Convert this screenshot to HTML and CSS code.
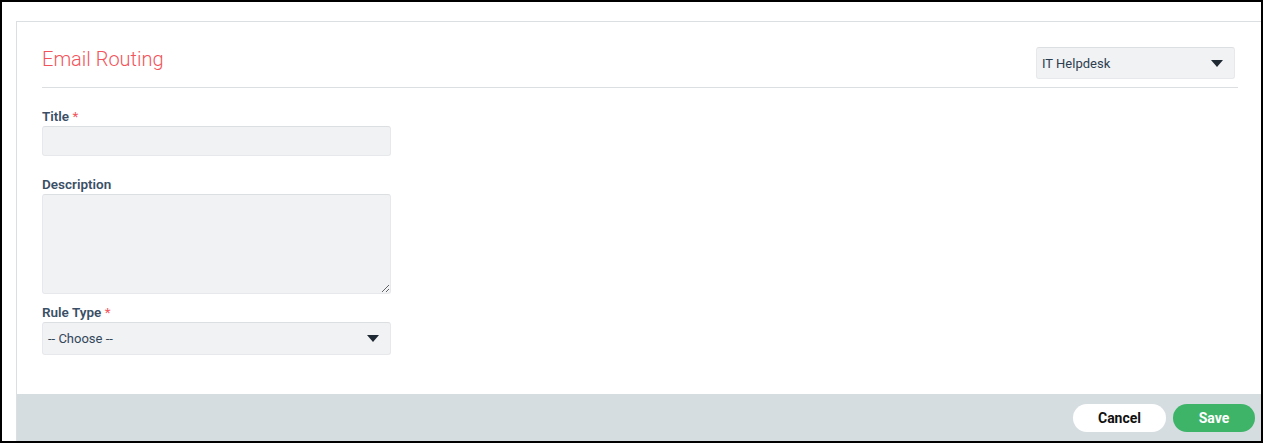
FILE: index.html
```html
<!DOCTYPE html>
<html lang="en">
<head>
<meta charset="utf-8">
<title>Email Routing</title>
<link rel="stylesheet" href="styles.css">
</head>
<body>
<div class="frame">
  <div class="panel">
    <div class="panel-body">
      <div class="header">
        <h1 class="title">Email Routing</h1>
        <div class="select select-team">
          <span class="select-text">IT Helpdesk</span>
          <svg class="caret" width="12" height="7" viewBox="0 0 12 7"><path d="M0 0 L12 0 L6 7 Z" fill="#1f2933"/></svg>
        </div>
      </div>
      <div class="form">
        <div class="field field-title">
          <label class="label">Title <span class="req">*</span></label>
          <input class="input" type="text">
        </div>
        <div class="field field-desc">
          <label class="label">Description</label>
          <textarea class="textarea"></textarea>
        </div>
        <div class="field">
          <label class="label">Rule Type <span class="req">*</span></label>
          <div class="select select-rule">
            <span class="select-text">-- Choose --</span>
            <svg class="caret" width="12" height="7" viewBox="0 0 12 7"><path d="M0 0 L12 0 L6 7 Z" fill="#1f2933"/></svg>
          </div>
        </div>
      </div>
    </div>
    <div class="footer">
      <button class="btn btn-cancel">Cancel</button>
      <button class="btn btn-save">Save</button>
    </div>
  </div>
</div>
</body>
</html>
```

FILE: styles.css
```css
html, body {
  margin: 0;
  padding: 0;
  background: #ffffff;
}
.frame {
  box-sizing: border-box;
  width: 1263px;
  height: 443px;
  border: 2px solid #000;
  padding: 19px 0 0 14px;
  display: flex;
  font-family: Roboto, "Liberation Sans", Arial, sans-serif;
}
.panel {
  flex: 1;
  display: flex;
  flex-direction: column;
  border-top: 1px solid #dcdfe2;
  border-left: 1px solid #dcdfe2;
  background: #fff;
}
.panel-body {
  flex: 1;
  padding: 0 23px 0 25px;
}
.header {
  display: flex;
  align-items: center;
  justify-content: space-between;
  padding: 25px 3px 8px 0;
  border-bottom: 1px solid #dcdfe2;
}
.title {
  margin: 0;
  font-size: 20px;
  font-weight: 300;
  color: #f2545b;
  line-height: 26px;
  position: relative;
  top: -4px;
}
.select {
  box-sizing: border-box;
  display: flex;
  align-items: center;
  justify-content: space-between;
  background: #f1f2f4;
  border: 1px solid #e6e8eb;
  border-top-color: #dcdfe2;
  border-radius: 3px;
  font-size: 13px;
  color: #33475b;
}
.select-team {
  width: 199px;
  height: 32px;
  padding: 0 11px 0 5px;
  color: #2d3e50;
}
.select-rule {
  width: 349px;
  height: 33px;
  padding: 0 11px 0 5px;
}
.caret { display: block; }
.form {
  padding-top: 20px;
}
.field-title { margin-bottom: 20px; }
.field-desc { margin-bottom: 10px; }
.label {
  display: block;
  font-size: 13.5px;
  font-weight: 600;
  line-height: 16px;
  color: #3a4f66;
  margin-bottom: 2px;
}
.req { color: #f2545b; font-weight: 400; }
.input, .textarea {
  box-sizing: border-box;
  display: block;
  width: 349px;
  margin: 0;
  background: #f1f2f4;
  border: 1px solid #e6e8eb;
  border-top-color: #dcdfe2;
  border-radius: 3px;
  font-family: inherit;
  font-size: 13px;
  outline: none;
}
.input { height: 30px; }
.textarea { height: 100px; }
.footer {
  height: 47px;
  box-sizing: border-box;
  background: #d6dde0;
  display: flex;
  justify-content: flex-end;
  align-items: flex-start;
  padding: 10px 6px 0 0;
  gap: 7px;
}
.btn {
  height: 28px;
  border: none;
  border-radius: 14px;
  font-family: inherit;
  font-size: 14px;
  font-weight: 700;
  padding: 0;
  cursor: pointer;
}
.btn-cancel {
  width: 93px;
  background: #fff;
  color: #111;
}
.btn-save {
  width: 82px;
  background: #3db468;
  color: #fff;
}
```
